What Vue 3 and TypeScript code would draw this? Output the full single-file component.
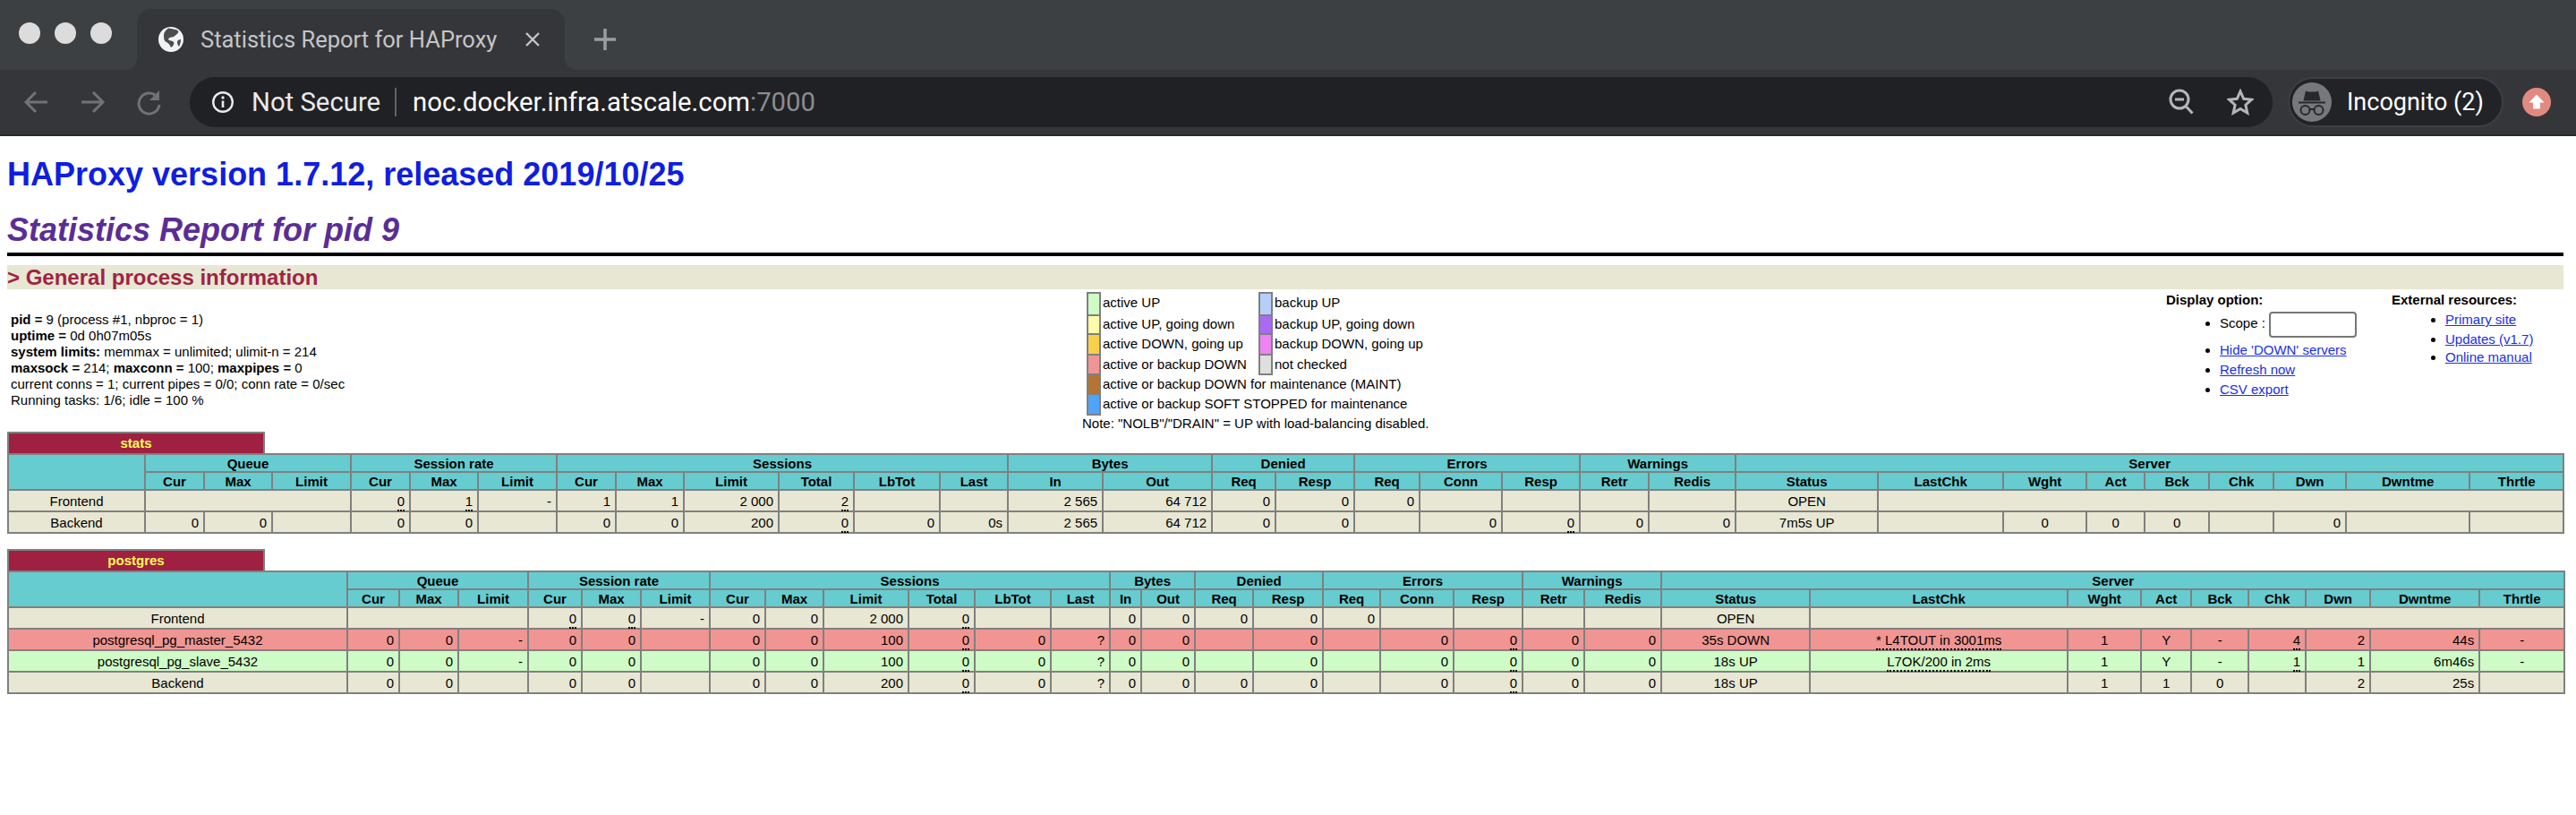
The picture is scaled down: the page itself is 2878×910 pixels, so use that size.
<script setup lang="ts">
type Cell = string | { span: number };

interface Row {
  kind: string;
  cells: Cell[];
}

interface Proxy {
  name: string;
  edges: number[];
  rows: Row[];
}

const groups = [
  { label: "Queue", span: 3 },
  { label: "Session rate", span: 3 },
  { label: "Sessions", span: 6 },
  { label: "Bytes", span: 2 },
  { label: "Denied", span: 2 },
  { label: "Errors", span: 3 },
  { label: "Warnings", span: 2 },
  { label: "Server", span: 9 },
];

const columns = [
  "Cur", "Max", "Limit", "Cur", "Max", "Limit", "Cur", "Max", "Limit", "Total", "LbTot", "Last",
  "In", "Out", "Req", "Resp", "Req", "Conn", "Resp", "Retr", "Redis",
  "Status", "LastChk", "Wght", "Act", "Bck", "Chk", "Dwn", "Dwntme", "Thrtle",
];

// column index of the cells that are centred, everything else sits right
const centered = new Set([0, 22, 23, 24, 25, 26, 30]);

// a leading ~ means the value has the dotted tooltip underline
const proxies: Proxy[] = [
  {
    name: "stats",
    edges: [8, 161, 227, 303, 391, 457, 533, 621, 687, 763, 869, 953, 1049, 1125, 1231, 1353, 1424, 1512, 1585, 1677, 1764, 1841, 1938, 2097, 2237, 2330, 2395, 2467, 2539, 2620, 2758, 2863],
    rows: [
      {
        kind: "plain",
        cells: ["Frontend", { span: 3 }, "~0", "~1", "-", "1", "1", "2 000", "~2", "", "", "2 565", "64 712", "0", "0", "0", "", "", "", "", "OPEN", { span: 8 }],
      },
      {
        kind: "plain",
        cells: ["Backend", "0", "0", "", "0", "0", "", "0", "0", "200", "~0", "0", "0s", "2 565", "64 712", "0", "0", "", "0", "~0", "0", "0", "7m5s UP", "", "0", "0", "0", "", "0", "", ""],
      },
    ],
  },
  {
    name: "postgres",
    edges: [8, 387, 445, 511, 589, 649, 715, 792, 854, 919, 1014, 1088, 1173, 1239, 1274, 1334, 1399, 1477, 1541, 1623, 1700, 1769, 1855, 2021, 2309, 2391, 2447, 2511, 2575, 2647, 2769, 2864],
    rows: [
      {
        kind: "plain",
        cells: ["Frontend", { span: 3 }, "~0", "~0", "-", "0", "0", "2 000", "~0", "", "", "0", "0", "0", "0", "0", "", "", "", "", "OPEN", { span: 8 }],
      },
      {
        kind: "down",
        cells: ["postgresql_pg_master_5432", "0", "0", "-", "0", "0", "", "0", "0", "100", "~0", "0", "?", "0", "0", "", "0", "", "0", "~0", "0", "0", "35s DOWN", "~* L4TOUT in 3001ms", "1", "Y", "-", "~4", "2", "44s", "-"],
      },
      {
        kind: "up",
        cells: ["postgresql_pg_slave_5432", "0", "0", "-", "0", "0", "", "0", "0", "100", "~0", "0", "?", "0", "0", "", "0", "", "0", "~0", "0", "0", "18s UP", "~L7OK/200 in 2ms", "1", "Y", "-", "~1", "1", "6m46s", "-"],
      },
      {
        kind: "plain",
        cells: ["Backend", "0", "0", "", "0", "0", "", "0", "0", "200", "~0", "0", "?", "0", "0", "0", "0", "", "0", "~0", "0", "0", "18s UP", "", "1", "1", "0", "", "2", "25s", ""],
      },
    ],
  },
];

function colWidths(edges: number[]) {
  return edges.slice(1).map((e, i) => e - edges[i]);
}

function tableWidth(edges: number[]) {
  return edges[edges.length - 1] - edges[0] + 2;
}

function layoutCells(cells: Cell[]) {
  let col = 0;
  return cells.map((c) => {
    const span = typeof c === "string" ? 1 : c.span;
    const text = typeof c === "string" ? c : "";
    const out = {
      span,
      dotted: text.startsWith("~"),
      text: text.replace(/^~/, ""),
      center: centered.has(col),
    };
    col += span;
    return out;
  });
}

const legendPairs = [
  { a: "s-up", at: "active UP", b: "s-bup", bt: "backup UP" },
  { a: "s-godown", at: "active UP, going down", b: "s-bgodown", bt: "backup UP, going down" },
  { a: "s-goup", at: "active DOWN, going up", b: "s-bgoup", bt: "backup DOWN, going up" },
  { a: "s-down", at: "active or backup DOWN", b: "s-none", bt: "not checked" },
];
</script>

<template>
  <div class="browser">
    <div class="tabstrip">
      <div class="lights"><i></i><i></i><i></i></div>
      <div class="tab">
        <svg class="favicon" viewBox="0 0 28 28">
          <circle cx="14" cy="14" r="14" fill="#f1f2f3" />
          <path d="M11 1.5c4 1 9 1 11 3 1.500 2-3 5-5 6.500-2 1-5 0-6 3 1 2 5 1 6 3 1 2-1 5-3 6-1-3-3-5-5-6-3-1-3-5-3-8 0-3 2-5 5-7.500z" fill="#4a4c50" />
          <path d="M25 14c-2 0-4 1-4 3 0 2 1 4 2 5 1-2 2-5 2-8z" fill="#4a4c50" />
        </svg>
        <span class="tab-title">Statistics Report for HAProxy</span>
        <svg class="tab-close" viewBox="0 0 18 18">
          <path d="M2 2l14 14M16 2L2 16" stroke="#c4c5c7" stroke-width="2.4" fill="none" />
        </svg>
      </div>
      <svg class="new-tab" viewBox="0 0 26 26">
        <path d="M13 1v24M1 13h24" stroke="#9c9d9f" stroke-width="3.500" fill="none" />
      </svg>
    </div>

    <div class="toolbar">
      <svg class="nav" viewBox="0 0 30 30">
        <path d="M28 15H4M15 4L4 15l11 11" stroke="#6f7276" stroke-width="3" fill="none" />
      </svg>
      <svg class="nav" viewBox="0 0 30 30">
        <path d="M2 15h24M15 4l11 11-11 11" stroke="#6f7276" stroke-width="3" fill="none" />
      </svg>
      <svg class="nav" viewBox="0 0 30 30">
        <path d="M24 10a11.500 11.500 0 1 0 2 8" stroke="#6f7276" stroke-width="3" fill="none" />
        <path d="M26 2v11H15z" fill="#6f7276" />
      </svg>

      <div class="omnibox">
        <svg class="info" viewBox="0 0 26 26">
          <circle cx="13" cy="13" r="10.800" stroke="#e8eaed" stroke-width="2.400" fill="none" />
          <path d="M13 11.500v7.500" stroke="#e8eaed" stroke-width="2.600" />
          <circle cx="13" cy="8" r="1.700" fill="#e8eaed" />
        </svg>
        <span class="secure">Not Secure</span>
        <span class="sep"></span>
        <span class="url">noc.docker.infra.atscale.com<span class="port">:7000</span></span>
        <svg class="zoom-out" viewBox="0 0 30 30">
          <circle cx="13" cy="12" r="10" stroke="#b5b6b8" stroke-width="3" fill="none" />
          <path d="M8 12h10M20 19.500l7.500 8" stroke="#b5b6b8" stroke-width="3" fill="none" />
        </svg>
        <svg class="star" viewBox="0 0 30 30">
          <path d="M15 3l3.700 8.300 8.800.9-6.600 6 1.900 8.800-7.800-4.600L7.200 27l1.900-8.800-6.600-6 8.800-.9z" stroke="#b5b6b8" stroke-width="3" fill="none" />
        </svg>
      </div>

      <div class="incognito">
        <svg class="avatar" viewBox="0 0 44 44">
          <circle cx="22" cy="22" r="22" fill="#77787b" />
          <path d="M15 9.500l3 1h8l3-1 2.500 11h-19z" fill="#27282b" />
          <path d="M7 22.500h30" stroke="#27282b" stroke-width="2" />
          <circle cx="14.500" cy="31" r="5" stroke="#27282b" stroke-width="2" fill="none" />
          <circle cx="29.500" cy="31" r="5" stroke="#27282b" stroke-width="2" fill="none" />
          <path d="M19.500 30h5" stroke="#27282b" stroke-width="2" />
        </svg>
        <span>Incognito (2)</span>
      </div>

      <svg class="update" viewBox="0 0 32 32">
        <circle cx="16" cy="16" r="16" fill="#e28a82" />
        <path d="M16 7.500l8.500 9h-4.500v7h-8v-7H7.500z" fill="#fff" />
      </svg>
    </div>
    <div class="edge"></div>
  </div>

  <main class="page">
    <h1>HAProxy version 1.7.12, released 2019/10/25</h1>
    <h2>Statistics Report for pid 9</h2>
    <div class="rule"></div>
    <h3>&gt; General process information</h3>

    <section class="overview">
      <p class="process">
        <b>pid = </b>9 (process #1, nbproc = 1)<br />
        <b>uptime = </b>0d 0h07m05s<br />
        <b>system limits:</b> memmax = unlimited; ulimit-n = 214<br />
        <b>maxsock = </b>214; <b>maxconn = </b>100; <b>maxpipes = </b>0<br />
        current conns = 1; current pipes = 0/0; conn rate = 0/sec<br />
        Running tasks: 1/6; idle = 100 %
      </p>

      <div class="legend-wrap">
        <table class="legend">
          <tbody>
            <tr v-for="p in legendPairs" :key="p.at">
              <td class="swatch" :class="p.a"></td>
              <td class="lbl first">{{ p.at }}</td>
              <td class="swatch" :class="p.b"></td>
              <td class="lbl">{{ p.bt }}</td>
            </tr>
            <tr>
              <td class="swatch s-maint"></td>
              <td class="lbl" colspan="3">active or backup DOWN for maintenance (MAINT)</td>
            </tr>
            <tr>
              <td class="swatch s-soft"></td>
              <td class="lbl" colspan="3">active or backup SOFT STOPPED for maintenance</td>
            </tr>
          </tbody>
        </table>
        <div class="note">Note: "NOLB"/"DRAIN" = UP with load-balancing disabled.</div>
      </div>

      <div class="links">
        <b>Display option:</b>
        <ul>
          <li class="scope">Scope : <input type="text" /></li>
          <li><a href="#">Hide 'DOWN' servers</a></li>
          <li><a href="#">Refresh now</a></li>
          <li><a href="#">CSV export</a></li>
        </ul>
      </div>

      <div class="links">
        <b>External resources:</b>
        <ul>
          <li><a href="#">Primary site</a></li>
          <li><a href="#">Updates (v1.7)</a></li>
          <li class="tight"><a href="#">Online manual</a></li>
        </ul>
      </div>
    </section>

    <section v-for="px in proxies" :key="px.name" class="proxy">
      <div class="pxname">{{ px.name }}</div>
      <table class="tbl" :style="{ width: tableWidth(px.edges) + 'px' }">
        <colgroup>
          <col v-for="(w, i) in colWidths(px.edges)" :key="i" :style="{ width: w + 'px' }" />
        </colgroup>
        <thead>
          <tr>
            <th rowspan="2"></th>
            <th v-for="g in groups" :key="g.label" :colspan="g.span">{{ g.label }}</th>
          </tr>
          <tr>
            <th v-for="(c, i) in columns" :key="i">{{ c }}</th>
          </tr>
        </thead>
        <tbody>
          <tr v-for="(row, r) in px.rows" :key="r" :class="row.kind">
            <td
              v-for="(c, i) in layoutCells(row.cells)"
              :key="i"
              :colspan="c.span"
              :class="{ center: c.center }"
            >
              <u v-if="c.dotted">{{ c.text }}</u>
              <template v-else>{{ c.text }}</template>
            </td>
          </tr>
        </tbody>
      </table>
    </section>
  </main>
</template>

<style scoped>
.browser {
  font-family: Roboto, "Liberation Sans", sans-serif;
}
.tabstrip {
  display: flex;
  height: 78px;
  background: #3d4043;
}
.lights {
  display: flex;
  gap: 16px;
  margin: 25px 0 0 21px;
}
.lights i {
  width: 24px;
  height: 24px;
  border-radius: 50%;
  background: #dcdcdc;
}
.tab {
  position: relative;
  display: flex;
  align-items: center;
  width: 478px;
  height: 68px;
  margin: 10px 0 0 28px;
  padding-left: 24px;
  box-sizing: border-box;
  background: #35363a;
  border-radius: 16px 16px 0 0;
}
.tab::before,
.tab::after {
  content: "";
  position: absolute;
  bottom: 0;
  width: 14px;
  height: 14px;
}
.tab::before {
  left: -14px;
  background: radial-gradient(circle at 0 0, transparent 14px, #35363a 14.500px);
}
.tab::after {
  right: -14px;
  background: radial-gradient(circle at 100% 0, transparent 14px, #35363a 14.500px);
}
.favicon {
  width: 28px;
  height: 28px;
  flex: none;
}
.tab-title {
  margin-left: 19px;
  width: 362px;
  flex: none;
  color: #c4c5c7;
  font-size: 25.500px;
  white-space: nowrap;
}
.tab-close {
  width: 18px;
  height: 18px;
  flex: none;
}
.new-tab {
  width: 26px;
  height: 26px;
  margin: 31px 0 0 32px;
}
.toolbar {
  display: flex;
  align-items: center;
  height: 72px;
  padding-left: 25px;
  background: #35363a;
}
.nav {
  width: 30px;
  height: 30px;
  margin-right: 33.500px;
  flex: none;
}
.omnibox {
  display: flex;
  align-items: center;
  width: 2327px;
  height: 56px;
  margin-left: -3.500px;
  padding: 0 21px 0 24px;
  box-sizing: border-box;
  border-radius: 28px;
  background: #202124;
  color: #fff;
  font-size: 29.300px;
  white-space: nowrap;
}
.info {
  width: 26px;
  height: 26px;
  flex: none;
}
.secure {
  margin-left: 19px;
  width: 143px;
  color: #e8eaed;
}
.sep {
  width: 2px;
  height: 32px;
  margin: 0 18px 0 17px;
  background: #5f6368;
}
.port {
  color: #8a8c90;
}
.zoom-out {
  width: 30px;
  height: 30px;
  margin-left: auto;
}
.star {
  width: 30px;
  height: 30px;
  margin-left: 36px;
}
.incognito {
  display: flex;
  align-items: center;
  gap: 17px;
  width: 241px;
  height: 56px;
  margin-left: 17px;
  padding-left: 3px;
  box-sizing: border-box;
  border: 2px solid #3e3f44;
  border-radius: 28px;
  background: #222327;
  color: #fff;
  font-size: 27px;
  white-space: nowrap;
}
.avatar {
  width: 44px;
  height: 44px;
  flex: none;
}
.update {
  width: 32px;
  height: 32px;
  margin-left: 21px;
  flex: none;
}
.edge {
  height: 2px;
  background: #28292b;
}

.page {
  padding: 22px 14px 0 8px;
  font-family: "Liberation Sans", Arial, sans-serif;
  font-size: 15px;
  color: #000;
}
h1,
h2,
h3 {
  margin: 0;
  font-weight: bold;
}
h1 {
  font-size: 36px;
  line-height: 42px;
  color: #0f1ee0;
}
h2 {
  margin-top: 20px;
  font-size: 36px;
  line-height: 42px;
  font-style: italic;
  color: #5a2d96;
}
.rule {
  height: 4px;
  margin-top: 4px;
  background: #000;
}
h3 {
  margin-top: 10px;
  font-size: 24px;
  line-height: 27px;
  color: #a02344;
  background: #e8e7d3;
}
.overview {
  display: grid;
  grid-template-columns: 1201px 1211px 252px 1fr;
  height: 159px;
  line-height: 18px;
}
.process {
  margin: 25px 0 0;
  padding-left: 4px;
}
.legend-wrap {
  padding-top: 3px;
}
.legend {
  margin-left: 5px;
  border-collapse: collapse;
  white-space: nowrap;
}
.legend tr {
  height: 22px;
}
.legend tr:nth-child(1) {
  height: 25px;
}
.legend tr:nth-child(2) {
  height: 21px;
}
.legend tr:nth-child(3),
.legend tr:nth-child(6) {
  height: 23px;
}
.swatch {
  width: 12px;
  padding: 0;
  border: 2px solid #808080;
}
.lbl {
  padding: 0 0 1px 2px;
}
.legend tr:nth-child(1) .lbl {
  padding-bottom: 3px;
}
.lbl.first {
  width: 174px;
}
.s-up { background: #cefbc6; }
.s-godown { background: #fefca8; }
.s-goup { background: #f8d04a; }
.s-down { background: #f09592; }
.s-bup { background: #b6cffa; }
.s-bgodown { background: #a96af6; }
.s-bgoup { background: #ec84f3; }
.s-none { background: #dfdfdf; }
.s-maint { background: #b57434; }
.s-soft { background: #4fa3fb; }
.note {
  white-space: nowrap;
}
.links {
  padding-top: 3px;
}
.links ul {
  margin: 4px 0 0;
  padding-left: 60px;
}
.links li {
  margin-bottom: 4px;
}
.links li.scope {
  height: 29px;
  margin-bottom: 5px;
}
.links li.tight {
  margin-top: -2px;
}
.links input {
  width: 98px;
  height: 29px;
  padding: 0;
  box-sizing: border-box;
  border: 2px solid #777;
  border-radius: 4px;
  vertical-align: middle;
}
.links a {
  color: #1a2fe8;
}

.proxy {
  margin-bottom: 17px;
}
.pxname {
  width: 288px;
  height: 24px;
  box-sizing: border-box;
  border: 2px solid #808080;
  border-bottom: none;
  background: #a02042;
  color: #ffff58;
  font-weight: bold;
  line-height: 22px;
  text-align: center;
}
.tbl {
  table-layout: fixed;
  border-collapse: collapse;
  white-space: nowrap;
}
.tbl th,
.tbl td {
  padding: 0 5px;
  border: 2px solid #808080;
  box-sizing: border-box;
  overflow: visible;
}
.tbl th {
  height: 20px;
  background: #66cccf;
  font-weight: bold;
  text-align: center;
}
.tbl td {
  height: 24px;
  text-align: right;
}
.tbl td.center {
  text-align: center;
}
.tbl tr.plain td { background: #e8e7d3; }
.tbl tr.down td { background: #f09592; }
.tbl tr.up td { background: #cefbc6; }
.tbl u {
  text-decoration: none;
  padding-bottom: 1px;
  border-bottom: 2px dotted #000;
}
</style>

<style>
body {
  margin: 0;
  background: #fff;
}
</style>
